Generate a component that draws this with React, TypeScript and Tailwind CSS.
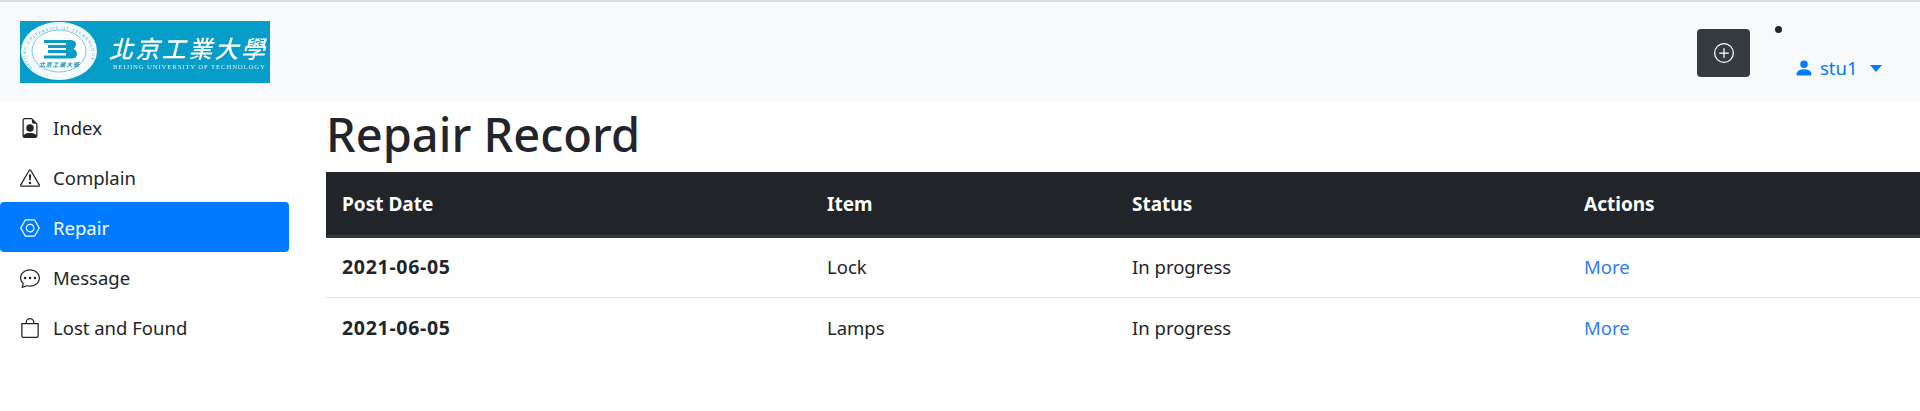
import { BsBag, BsChatDots, BsExclamationTriangle, BsFileEarmarkPerson, BsNut, BsPersonFill, BsPlusCircle } from "react-icons/bs";

const menu = [
  { label: "Index", icon: BsFileEarmarkPerson },
  { label: "Complain", icon: BsExclamationTriangle },
  { label: "Repair", icon: BsNut, active: true },
  { label: "Message", icon: BsChatDots },
  { label: "Lost and Found", icon: BsBag },
];

const records = [
  { date: "2021-06-05", item: "Lock", status: "In progress" },
  { date: "2021-06-05", item: "Lamps", status: "In progress" },
];

function Logo() {
  return (
    <svg viewBox="0 0 250 62" className="w-[250px] h-[62px] block">
      <rect width="250" height="62" fill="#079dc9" />
      <g className="blur-[0.4px]">
        <ellipse cx="39" cy="30" rx="38" ry="29" fill="#f4fbfd" />
        <ellipse cx="39" cy="30" rx="27" ry="21" fill="#ffffff" stroke="#7cc9e0" strokeWidth="1" />
        <path id="logoRing" d="M12 47a33 24.500 0 1 1 54 0" fill="none" />
        <text fontSize="4.200" fill="#3f9fc0" fontFamily="'Liberation Serif', serif">
          <textPath href="#logoRing" textLength="112">BEIJING UNIVERSITY OF TECHNOLOGY</textPath>
        </text>
        <path d="M24 19h26q6 0 6 4.500q0 3-2.500 4.500q3.500 1.500 3.500 5q0 4.500-6 4.500h-27v-3h22v-2.500h-18v-3h18v-2h-18v-3h18v-2h-22z" fill="#0a9cc9" />
        <text x="19" y="46" fontSize="6" fontWeight="700" fill="#1b8fb4" fontFamily="'Noto Sans CJK TC', sans-serif" fontStyle="italic" textLength="40">北京工業大學</text>
      </g>
      <g className="blur-[0.3px]">
        <text x="89" y="37" fontSize="24" fontWeight="500" fill="#ffffff" fontStyle="italic" fontFamily="'Noto Sans CJK TC', sans-serif" textLength="156">北京工業大學</text>
        <text x="93" y="48" fontSize="6.800" fill="#d5eff7" fontFamily="'Liberation Serif', serif" textLength="152">BEIJING UNIVERSITY OF TECHNOLOGY</text>
      </g>
    </svg>
  );
}

function App() {
  return (
    <div className="min-h-[411px] bg-white text-[#212529] font-['Noto_Sans',sans-serif] text-[18.500px]">
      <nav className="flex items-center justify-between h-[102px] bg-[#f8f9fa] border-t-2 border-[#dedede] pl-5">
        <Logo />
        <div className="flex items-start pr-[25px] pt-[10px]">
          <button type="button" className="flex items-center justify-center w-[53px] h-[48px] mt-[1px] rounded-[4px] bg-[#343a40] text-white text-[20px]">
            <BsPlusCircle />
          </button>
          <div className="ml-[25px] flex flex-col w-[120px]">
            <span className="w-[7px] h-[7px] mt-[-2px] rounded-full bg-[#212529]" />
            <a href="#" className="flex items-center mt-[17px] ml-[19px] text-[#007bff] leading-[36px]">
              <BsPersonFill className="shrink-0 text-[20px] mr-[6px]" />
              stu1
              <span className="ml-[12px] border-x-[6.500px] border-x-transparent border-t-[7px] border-t-[#007bff]" />
            </a>
          </div>
        </div>
      </nav>
      <div className="flex">
        <aside className="w-[326px] shrink-0">
          <ul className="w-[289px]">
            {menu.map((m) => (
              <li
                key={m.label}
                className={`flex items-center h-[50px] pl-5 pt-[1px] rounded-[4px] ${m.active ? "bg-[#007bff] text-white" : ""}`}
              >
                <m.icon className="text-[20px] mr-[13px]" />
                {m.label}
              </li>
            ))}
          </ul>
        </aside>
        <main className="flex-1">
          <h1 className="h-[70px] text-[47px] leading-[64px] font-medium">Repair Record</h1>
          <table className="w-full table-fixed border-collapse">
            <thead>
              <tr className="h-[64px] bg-[#212529] text-white text-left border-b-[3px] border-[#32383e] text-[19px]">
                <th className="w-[485px] pl-4 pt-[2px] font-bold">Post Date</th>
                <th className="w-[305px] pl-4 pt-[2px] font-bold">Item</th>
                <th className="w-[452px] pl-4 pt-[2px] font-bold">Status</th>
                <th className="pl-4 pt-[2px] font-bold">Actions</th>
              </tr>
            </thead>
            <tbody>
              {records.map((r, i) => (
                <tr key={r.item} className={`h-[61px] ${i === 0 ? "border-b border-[#dee2e6]" : ""}`}>
                  <td className="pl-4 font-bold text-[19.500px] tracking-[0.7px]">{r.date}</td>
                  <td className="pl-4">{r.item}</td>
                  <td className="pl-4">{r.status}</td>
                  <td className="pl-4">
                    <a href="#" className="text-[#2e7cf6]">More</a>
                  </td>
                </tr>
              ))}
            </tbody>
          </table>
        </main>
      </div>
    </div>
  );
}

export default App;
